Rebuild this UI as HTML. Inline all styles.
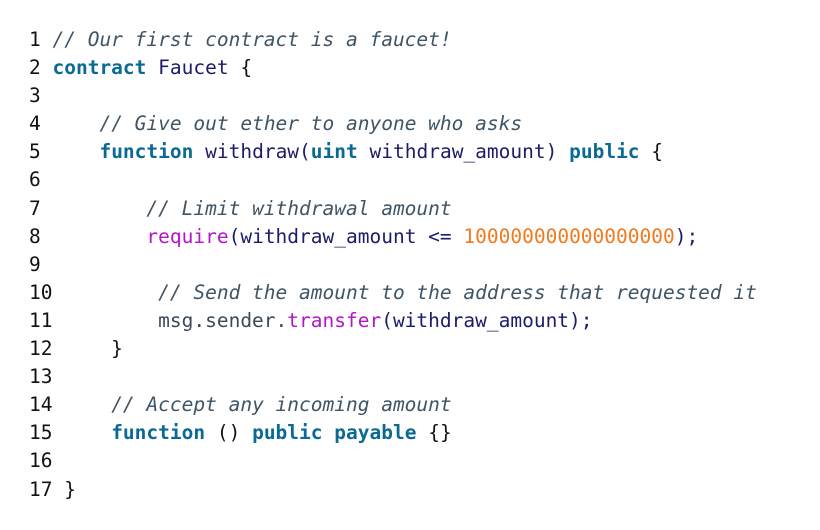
<!DOCTYPE html>
<html><head><style>
html,body{margin:0;padding:0;background:#fff;width:820px;height:530px;overflow:hidden}
pre{position:absolute;left:29px;top:26px;margin:0;font-family:"DejaVu Sans Mono","Liberation Mono",monospace;font-size:19.5px;line-height:28.1px;color:#111}
.c{color:#3f5566;font-style:italic}
.k{color:#0b6a94;font-weight:bold}
.i{color:#1c1c6b}
.n{color:#f27a1e}
.m{color:#b316c9}
.g{color:#3a4a5a}
</style></head><body>
<pre>1 <span class="c">// Our first contract is a faucet!</span>
2 <span class="k">contract</span> <span class="i">Faucet</span> {
3
4     <span class="c">// Give out ether to anyone who asks</span>
5     <span class="k">function</span> <span class="i">withdraw(</span><span class="k">uint</span> <span class="i">withdraw_amount)</span> <span class="k">public</span> {
6
7         <span class="c">// Limit withdrawal amount</span>
8         <span class="m">require</span><span class="i">(withdraw_amount &lt;=</span> <span class="n">100000000000000000</span><span class="i">);</span>
9
10         <span class="c">// Send the amount to the address that requested it</span>
11         <span class="g">msg.sender.</span><span class="m">transfer</span><span class="i">(withdraw_amount);</span>
12     }
13
14     <span class="c">// Accept any incoming amount</span>
15     <span class="k">function</span> () <span class="k">public</span> <span class="k">payable</span> {}
16
17 }</pre>
</body></html>
